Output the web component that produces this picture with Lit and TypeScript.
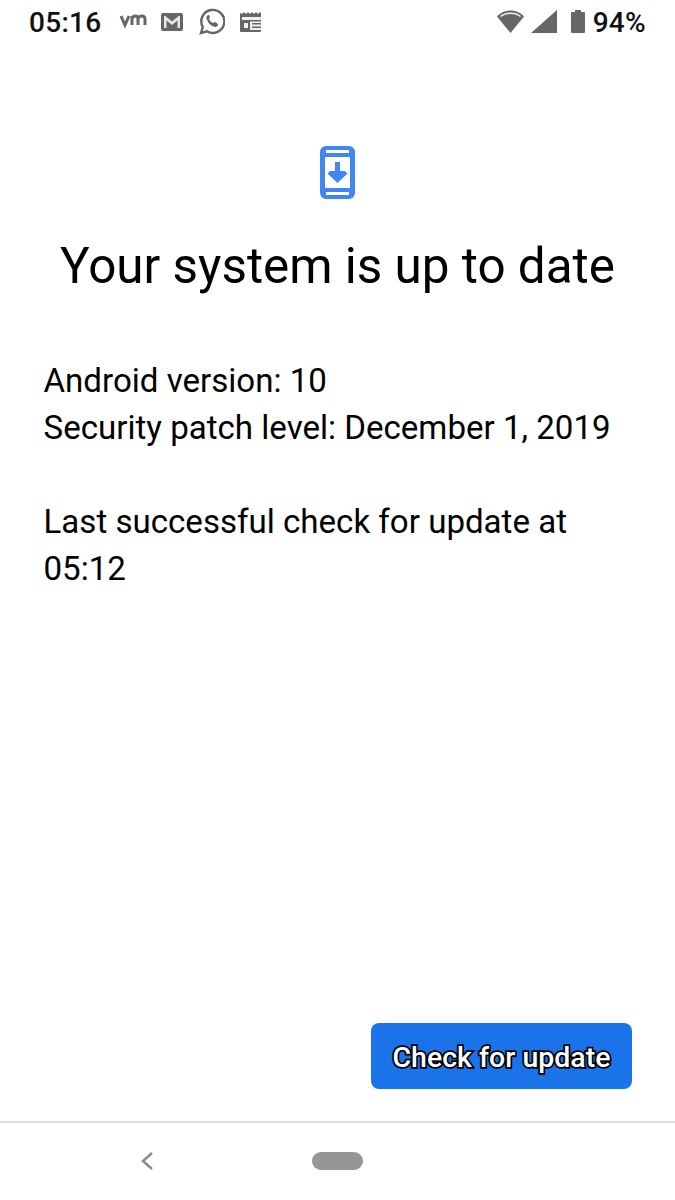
import { LitElement, html, css } from "lit";
import { customElement } from "lit/decorators.js";

@customElement("app-root")
export class AppRoot extends LitElement {
  static styles = css`
    :host { display: block; width: 675px; height: 1200px; background: #fff; font-family: Roboto, "Liberation Sans", sans-serif; color: #000; overflow: hidden; }
    .page { height: 1200px; display: flex; flex-direction: column; }
    .status { height: 45px; display: flex; align-items: center; padding: 0 29px; flex: none; }
    .status .ic { margin-bottom: 2px; }
    .time, .pct { font-size: 28px; font-weight: 500; color: #111; letter-spacing: 0.3px; }
    .status .vm { margin-left: 17px; width: 28px; height: 20px; margin-bottom: 5px; }
    .mail { margin-left: 14px; }
    .wa { margin-left: 16px; }
    .cal { margin-left: 15px; }
    .sig { margin-left: 7px; }
    .bat { margin-left: 14px; }
    .pct { margin-left: 8px; }
    .gap { flex: 1; }
    .ic { display: block; flex: none; }
    .main { flex: 1; display: flex; flex-direction: column; }
    .hero { padding-top: 101px; display: flex; justify-content: center; }
    h1 { margin: 35px 0 0; font-weight: 400; font-size: 49.4px; line-height: 64px; text-align: center; }
    .body { margin-top: 59px; padding: 0 43.5px; font-size: 33.1px; line-height: 47px; }
    .body p { margin: 0 0 47px; }
    .footer { margin-top: auto; display: flex; justify-content: flex-end; padding: 0 43px 32px 0; }
    button { width: 261px; height: 66px; border: 0; border-radius: 8px; background: #1a73e8; font: 500 28.5px Roboto, sans-serif; color: #fff; -webkit-text-stroke: 3.5px #000; paint-order: stroke fill; padding: 3px 0 0; }
    .nav { flex: none; height: 79px; border-top: 2px solid #dcdcdc; display: flex; align-items: center; box-sizing: border-box; padding-bottom: 2px; }
    .back { margin-left: 139px; }
    .pill { margin-left: 157px; width: 51px; height: 18px; border-radius: 9px; background: #969696; }
  `;
  render() {
    return html`<div class="page">
      <div class="status">
        <span class="time">05:16</span>
        <svg class="ic vm" viewBox="0 0 28 20"><path d="M2 6l4 9 4-9M13 15V6M13 9c1-4 6-4 6 0v6M19 9c1-4 7-4 7 0v6" fill="none" stroke="#666" stroke-width="3"/></svg>
        <svg class="ic mail" width="22" height="18" viewBox="0 0 22 18"><rect width="22" height="18" rx="2" fill="#666"/><path fill="#e6e6e6" d="M3 3v12h2.500V7.500L11 12l5.500-4.500V15H19V3h-1.500L11 8.500 4.500 3z"/></svg>
        <svg class="ic wa" width="26" height="27" viewBox="0 0 26 27"><path fill="none" stroke="#666" stroke-width="2.4" d="M2 25l1.800-6A11.500 11.500 0 1 1 8 23.300z"/><path fill="#666" d="M9 7c-2 1-2 3-1 5 2 4 4 6 8 7 2 0 3-1 3-3l-3-2-2 1c-2-1-3-2-4-4l1-2-1-2z"/></svg>
        <svg class="ic cal" width="23" height="20" viewBox="0 0 23 20"><path fill="#666" d="M0 1l2 1 2-2 2 2 2-2 2 2 2-2 2 2 2-2 2 2 2-2 1 1v18a1 1 0 0 1-1 1H1a1 1 0 0 1-1-1z"/><path fill="#f0f0f0" d="M2 5h19v13H2z"/><path fill="#666" d="M2 8h19v1.500H2zM2 9h8v9H2zM12 11h9v1.500h-9zM12 14.500h9V16h-9z"/><path fill="#f0f0f0" d="M4 11h4v5H4z"/></svg>
        <span class="gap"></span>
        <svg class="ic" width="27" height="23" viewBox="0 0 27 23"><path fill="#666" d="M13.500 23L0 6.500C3 3 8 .5 13.500.5S24 3 27 6.500z"/><path fill="none" stroke="#eee" stroke-width="1.600" d="M3.500 6.500C6 4.500 9.500 3.300 13.500 3.300s7.500 1.200 10 3.200"/></svg>
        <svg class="ic sig" width="26" height="23" viewBox="0 0 26 23"><path fill="#666" d="M26 0v23H0z"/></svg>
        <svg class="ic bat" width="14" height="23" viewBox="0 0 14 23"><path fill="#666" d="M4 0h6v2h3a1 1 0 0 1 1 1v19a1 1 0 0 1-1 1H1a1 1 0 0 1-1-1V3a1 1 0 0 1 1-1h3z"/></svg>
        <span class="pct">94%</span>
      </div>
      <div class="main">
        <div class="hero">
          <svg class="ic" width="35" height="53" viewBox="0 0 35 53">
            <path fill="#4285f4" fill-rule="evenodd" d="M6 0h23a6 6 0 0 1 6 6v41a6 6 0 0 1-6 6H6a6 6 0 0 1-6-6V6a6 6 0 0 1 6-6zM5 11v31h25V11zM6 4v3h23V4zM6 46v3h23v-3z"/>
            <path fill="#4285f4" d="M15 16h5v9h5l2.500 2.500L17.500 37 7.500 27.500 10 25h5z"/>
          </svg>
        </div>
        <h1>Your system is up to date</h1>
        <div class="body">
          <p>Android version: 10<br>Security patch level: December 1, 2019</p>
          <p>Last successful check for update at<br>05:12</p>
        </div>
        <div class="footer"><button>Check for update</button></div>
      </div>
      <div class="nav">
        <svg class="back ic" width="16" height="20" viewBox="0 0 16 20"><path d="M13 2L4 10l9 8" fill="none" stroke="#8c8c8c" stroke-width="2.500"/></svg>
        <div class="pill"></div>
      </div>
    </div>`;
  }
}
